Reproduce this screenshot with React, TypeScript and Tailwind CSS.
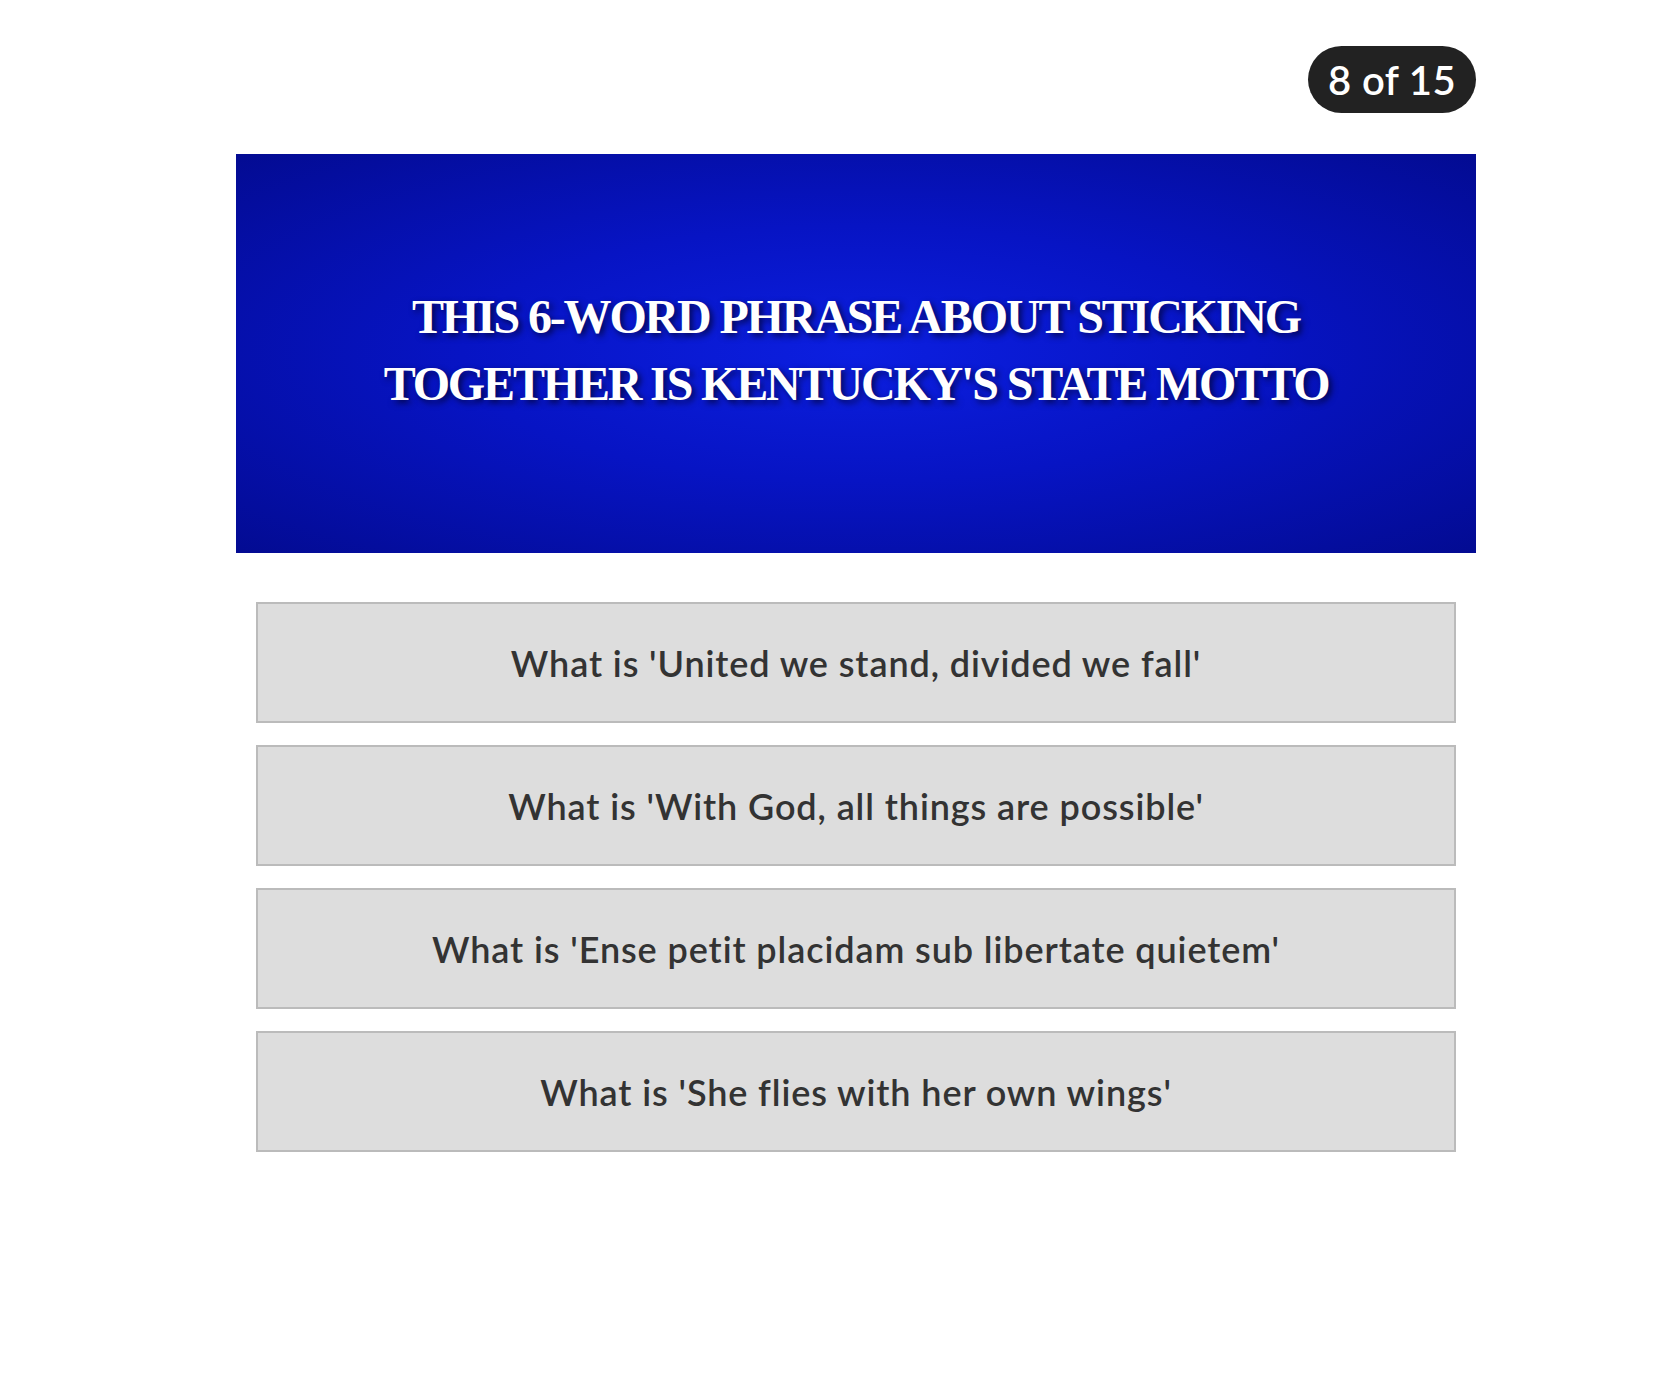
const answers = [
  "What is 'United we stand, divided we fall'",
  "What is 'With God, all things are possible'",
  "What is 'Ense petit placidam sub libertate quietem'",
  "What is 'She flies with her own wings'",
];

export default function App() {
  return (
    <div className="min-h-screen bg-white pl-[236px] pt-[46px]">
      <div className="w-[1240px]">
        <div className="flex justify-end">
          <div className="h-[67px] w-[168px] rounded-full bg-[#222222] flex items-center justify-center text-white text-[40px] font-semibold tracking-[0.01em] font-['Lato',sans-serif]">
            8 of 15
          </div>
        </div>

        <div className="mt-[41px] h-[399px] flex items-center justify-center bg-[radial-gradient(ellipse_at_center,#0c1fe0_0%,#0714c4_45%,#030b92_100%)]">
          <h2 className="text-center text-white uppercase font-bold text-[48px] leading-[67px] tracking-[-0.045em] font-['Liberation_Serif',serif] [text-shadow:3px_3px_6px_rgba(0,0,30,0.7)] mt-[-8px]">
            This 6-word phrase about sticking
            <br />
            together is Kentucky's state motto
          </h2>
        </div>

        <div className="mt-[49px] px-[20px] flex flex-col gap-[22px]">
          {answers.map((a) => (
            <div
              key={a}
              className="h-[121px] bg-[#dddddd] border-2 border-[#bbbbbb] flex items-center justify-center text-[#333333] text-[36px] font-semibold tracking-[0.025em] font-['Lato',sans-serif]"
            >
              {a}
            </div>
          ))}
        </div>
      </div>
    </div>
  );
}
